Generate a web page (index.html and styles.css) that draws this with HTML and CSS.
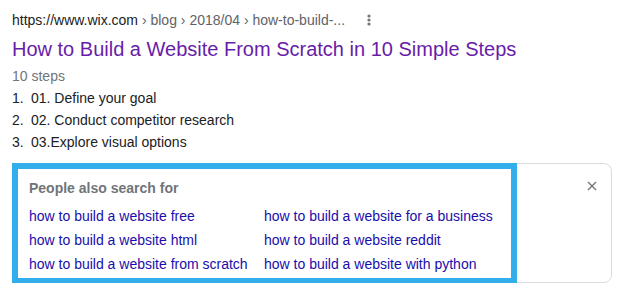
FILE: index.html
```html
<!DOCTYPE html>
<html lang="en">
<head>
    <meta charset="UTF-8">
    <title>How to Build a Website From Scratch</title>
    <link rel="stylesheet" href="styles.css">
</head>
<body>

<div class="result">
    <div class="crumbs">
        <span class="site">https://www.wix.com</span>
        <span class="path"> › blog › 2018/04 › how-to-build-...</span>
        <svg class="more" width="4" height="12" viewBox="0 0 4 12">
            <circle cx="2" cy="2" r="1.6" fill="#70757a"/>
            <circle cx="2" cy="6" r="1.6" fill="#70757a"/>
            <circle cx="2" cy="10" r="1.6" fill="#70757a"/>
        </svg>
    </div>
    <a class="title" href="#">How to Build a Website From Scratch in 10 Simple Steps</a>
    <div class="count">10 steps</div>
    <ol class="steps">
        <li>01. Define your goal</li>
        <li>02. Conduct competitor research</li>
        <li>03.Explore visual options</li>
    </ol>
</div>

<div class="related-card">
    <div class="related">
        <div class="related-head">People also search for</div>
        <div class="related-grid">
            <a href="#">how to build a website free</a>
            <a href="#">how to build a website for a business</a>
            <a href="#">how to build a website html</a>
            <a href="#">how to build a website reddit</a>
            <a href="#">how to build a website from scratch</a>
            <a href="#">how to build a website with python</a>
        </div>
    </div>
    <button class="close" type="button">
        <svg width="10" height="10" viewBox="0 0 10 10">
            <path d="M1 1 L9 9 M9 1 L1 9" stroke="#70757a" stroke-width="1.4"/>
        </svg>
    </button>
</div>

</body>
</html>
```

FILE: styles.css
```css
body {
    font-family: Arial, "Liberation Sans", sans-serif;
    font-size: 14px;
    color: #202124;
    margin: 0;
    padding: 9px 12px 0 12px;
    background: #fff;
}

a {
    text-decoration: none;
}

.crumbs {
    display: flex;
    align-items: center;
    line-height: 22px;
    white-space: pre;
}

.crumbs .path {
    color: #5f6368;
}

.crumbs .more {
    margin-left: 22px;
}

.title {
    display: block;
    margin-top: 5px;
    font-size: 20px;
    line-height: 26px;
    color: #681da8;
}

.count {
    margin-top: 3px;
    line-height: 22px;
    color: #70757a;
}

.steps {
    list-style: none;
    margin: 0;
    padding: 0;
    counter-reset: step;
}

.steps li {
    line-height: 22px;
    counter-increment: step;
}

.steps li::before {
    content: counter(step) ".";
    display: inline-block;
    width: 19px;
}

.related-card {
    display: flex;
    justify-content: space-between;
    align-items: flex-start;
    width: 600px;
    height: 120px;
    margin-top: 10px;
    border: 1px solid #dadce0;
    border-radius: 8px;
    box-sizing: border-box;
}

.related {
    width: 505px;
    height: 121px;
    margin: -1px 0 0 -1px;
    padding: 9px 10px 0 11px;
    border: 6px solid #32afea;
    box-sizing: border-box;
}

.related-head {
    font-weight: bold;
    color: #70757a;
    line-height: 20px;
}

.related-grid {
    display: grid;
    grid-template-columns: 235px auto;
    margin-top: 6px;
}

.related-grid a {
    color: #1a0dab;
    line-height: 24px;
    white-space: nowrap;
}

.close {
    border: none;
    background: none;
    padding: 0;
    margin: 15px 14px 0 0;
    width: 10px;
    height: 10px;
    cursor: pointer;
}
```
